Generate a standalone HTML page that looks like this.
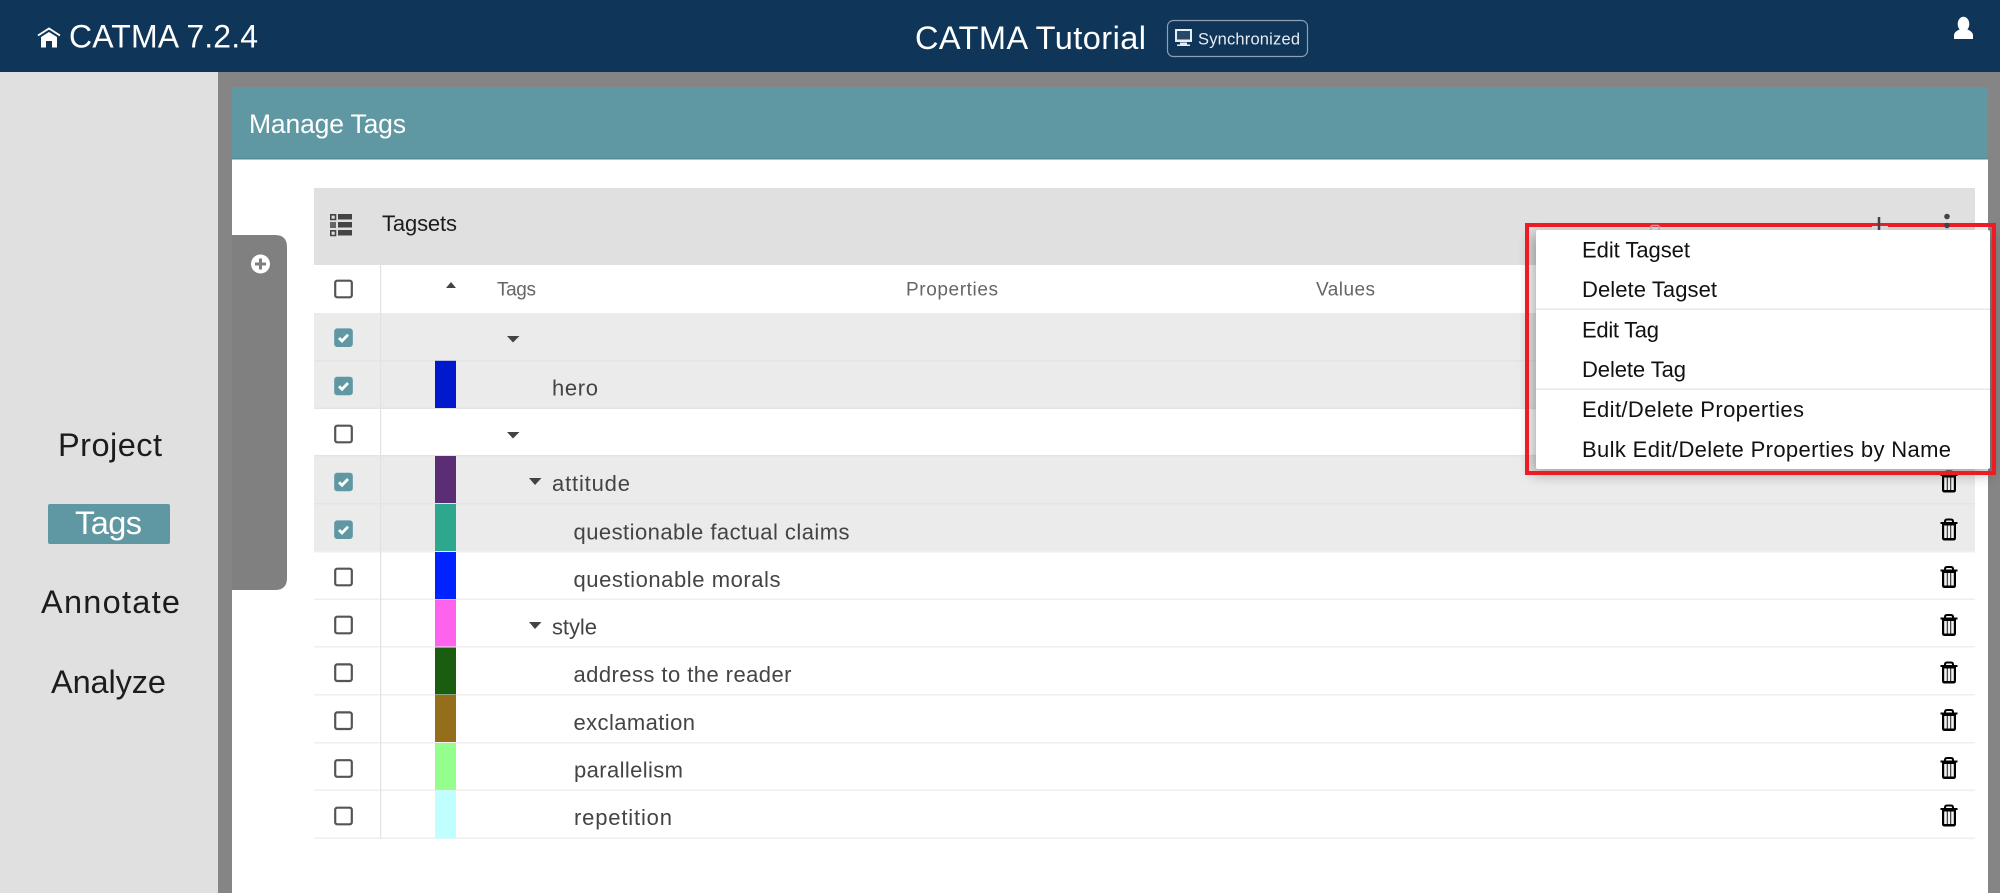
<!DOCTYPE html>
<html><head><meta charset="utf-8"><style>
html,body{margin:0;padding:0;width:2000px;height:893px;overflow:hidden;background:#fff}
svg{display:block}
text{font-family:"Liberation Sans",sans-serif}
</style></head><body>
<svg width="2000" height="893" viewBox="0 0 2000 893" xmlns="http://www.w3.org/2000/svg">
<defs>
<filter id="sh" x="-10%" y="-10%" width="120%" height="125%"><feGaussianBlur stdDeviation="7"/></filter>
<g id="trash"><path d="M-8.500-7H8.500M-4-7.500V-8.500Q-4-10.500 -2-10.500H2Q4-10.500 4-8.500V-7.500" fill="none" stroke="#000" stroke-width="2"/><path d="M-7-6H7V8Q7 10.500 4.500 10.500H-4.500Q-7 10.500-7 8Z" fill="#000"/><path d="M-4.800-4.500H-2.200V8H-4.800ZM-1.300-4.500H1.300V8H-1.300ZM2.200-4.500H4.800V8H2.200Z" fill="#f2f2f2"/></g>
<g id="cb"><rect x="-8.300" y="-8.300" width="16.600" height="16.600" rx="2" fill="#fff" stroke="#555" stroke-width="2.200"/></g>
<g id="cc"><rect x="-9.300" y="-9.300" width="18.600" height="18.600" rx="3" fill="#5f97a2"/><path d="M-4.500 0.300L-1.500 3.300L4.500-3" fill="none" stroke="#fff" stroke-width="2.800"/></g>
</defs>

<!-- header -->
<rect width="2000" height="72" fill="#0f3658"/>
<path d="M38 35.500L49 28.500L60 35.500" fill="none" stroke="#fff" stroke-width="1.800"/>
<path d="M49 32L57 37V47.500H52V41H46V47.500H41V37Z" fill="#fff"/>
<text x="69" y="47.500" font-size="32" fill="#fff" textLength="189">CATMA 7.2.4</text>
<text x="915" y="49" font-size="32.500" fill="#fff" textLength="231">CATMA Tutorial</text>
<rect x="1167.500" y="20.500" width="140" height="36" rx="6" fill="none" stroke="#8d9fb0" stroke-width="1.200"/>
<path d="M1175 29H1192V42H1175Z" fill="#e8edf1"/><rect x="1177" y="31" width="13" height="8.500" fill="#26486a"/><path d="M1180 42.500H1187V44.500H1190V46H1177V44.500H1180Z" fill="#e8edf1"/>
<text x="1198" y="44.500" font-size="16.500" fill="#e8edf1" textLength="102">Synchronized</text>
<ellipse cx="1963.500" cy="24" rx="5.800" ry="7.300" fill="#fff"/>
<path d="M1959.500 29.500Q1954.500 31.500 1954 35V39H1973V35Q1972.500 31.500 1967.500 29.500Z" fill="#fff"/>

<!-- chrome -->
<rect y="72" width="218" height="821" fill="#e0e0e0"/>
<rect x="218" y="72" width="1782" height="821" fill="#858585"/>
<rect x="232" y="87" width="1756" height="806" fill="#fff"/>
<rect x="232" y="87" width="1756" height="72" fill="#5f97a2"/>
<rect x="232" y="158" width="1756" height="1.500" fill="#558c97"/>
<text x="249" y="133" font-size="26.500" fill="#fff" textLength="157">Manage Tags</text>

<!-- sidebar -->
<text x="58" y="456" font-size="32.500" fill="#1c1c1c" textLength="104">Project</text>
<rect x="48" y="504" width="122" height="40" rx="2" fill="#5f97a2"/>
<text x="75" y="534" font-size="32.500" fill="#fff" textLength="67">Tags</text>
<text x="41" y="613" font-size="32.500" fill="#1c1c1c" textLength="139">Annotate</text>
<text x="51" y="693" font-size="32.500" fill="#1c1c1c" textLength="115">Analyze</text>

<!-- left tab -->
<path d="M232 235H275Q287 235 287 247V578Q287 590 275 590H232Z" fill="#808080"/>
<circle cx="260.500" cy="264" r="9.500" fill="#fff"/>
<path d="M255 264H266M260.500 258.500V269.500" stroke="#808080" stroke-width="3"/>

<!-- tagsets bar -->
<rect x="314" y="188" width="1661" height="77" fill="#e0e0e0"/>
<path d="M330.800 214.800H335.500V219.500H330.800ZM330.800 230.800H335.500V235.500H330.800Z" fill="none" stroke="#444" stroke-width="1.600"/>
<rect x="330" y="222" width="6" height="6" fill="#666"/>
<path d="M338 214H352V219.500H338ZM338 222H352V227.500H338ZM338 230H352V235.500H338Z" fill="#444"/>
<text x="382" y="231" font-size="22" fill="#1c1c1c" textLength="75">Tagsets</text>

<!-- column headers -->
<use href="#cb" x="343.500" y="289"/>
<path d="M446 288L451 282L456 288Z" fill="#444"/>
<text x="497" y="295.500" font-size="19" fill="#666" textLength="39">Tags</text>
<text x="906" y="295.500" font-size="19" fill="#666" textLength="92">Properties</text>
<text x="1316" y="295.500" font-size="19" fill="#666" textLength="59">Values</text>

<!-- rows -->
<rect x="314" y="313" width="1661" height="95" fill="#ebebeb"/>
<rect x="314" y="456" width="1661" height="95.500" fill="#ebebeb"/>
<g fill="#e4e4e4">
<rect x="314" y="360" width="1661" height="1.500"/>
<rect x="314" y="407.500" width="1661" height="1.500"/>
<rect x="314" y="455" width="1661" height="1.500"/>
<rect x="314" y="503" width="1661" height="1.500"/>
</g>
<g fill="#efefef">
<rect x="314" y="551" width="1661" height="1.500"/>
<rect x="314" y="598.500" width="1661" height="1.500"/>
<rect x="314" y="646" width="1661" height="1.500"/>
<rect x="314" y="694" width="1661" height="1.500"/>
<rect x="314" y="742" width="1661" height="1.500"/>
<rect x="314" y="789.500" width="1661" height="1.500"/>
<rect x="314" y="837.500" width="1661" height="1.500"/>
</g>
<rect x="380" y="265" width="1.200" height="574" fill="#e2e2e2"/>

<!-- swatches -->
<rect x="435" y="360.800" width="21" height="47.200" fill="#0019cc"/>
<rect x="435" y="456" width="21" height="47" fill="#5a2d75"/>
<rect x="435" y="504" width="21" height="47" fill="#2da88e"/>
<rect x="435" y="552" width="21" height="47" fill="#0022ff"/>
<rect x="435" y="599.500" width="21" height="47" fill="#fd63ed"/>
<rect x="435" y="647.500" width="21" height="47" fill="#1a5c10"/>
<rect x="435" y="695" width="21" height="47" fill="#946e1a"/>
<rect x="435" y="743" width="21" height="47" fill="#94ff8c"/>
<rect x="435" y="790.500" width="21" height="48" fill="#c0ffff"/>

<!-- checkboxes -->
<use href="#cc" x="343.500" y="337.700"/>
<use href="#cc" x="343.500" y="386"/>
<use href="#cb" x="343.500" y="434"/>
<use href="#cc" x="343.500" y="482"/>
<use href="#cc" x="343.500" y="529.700"/>
<use href="#cb" x="343.500" y="577"/>
<use href="#cb" x="343.500" y="625"/>
<use href="#cb" x="343.500" y="672.700"/>
<use href="#cb" x="343.500" y="720.700"/>
<use href="#cb" x="343.500" y="768.500"/>
<use href="#cb" x="343.500" y="816"/>

<!-- triangles -->
<g fill="#444">
<path d="M507 336H519.500L513 342.500Z"/>
<path d="M507 432H519.500L513 438.500Z"/>
<path d="M529 478H541.500L535 485Z"/>
<path d="M529 622H541.500L535 629Z"/>
</g>

<!-- row labels -->
<g font-size="22" fill="#444">
<text x="552" y="395.500" textLength="46">hero</text>
<text x="552" y="491.200" textLength="78">attitude</text>
<text x="573.500" y="539.300" textLength="276">questionable factual claims</text>
<text x="573.500" y="587" textLength="207">questionable morals</text>
<text x="552" y="634.500" textLength="45">style</text>
<text x="573.500" y="682" textLength="218">address to the reader</text>
<text x="573.500" y="730" textLength="121.500">exclamation</text>
<text x="574" y="777.500" textLength="109">parallelism</text>
<text x="574" y="825" textLength="98">repetition</text>
</g>

<!-- trash -->
<use href="#trash" x="1949" y="482"/>
<use href="#trash" x="1949" y="530"/>
<use href="#trash" x="1949" y="577.500"/>
<use href="#trash" x="1949" y="625.500"/>
<use href="#trash" x="1949" y="673"/>
<use href="#trash" x="1949" y="720.500"/>
<use href="#trash" x="1949" y="768.500"/>
<use href="#trash" x="1949" y="816"/>

<!-- menu -->
<rect x="1532" y="234" width="460" height="240" fill="#000" opacity=".32" filter="url(#sh)"/>
<rect x="1527" y="225" width="467" height="248" fill="none" stroke="#ed1c24" stroke-width="4"/>
<!-- toolbar icons peeking above the menu -->
<rect x="1872" y="226" width="16" height="4" fill="#d6d6d6"/>
<path d="M1879 217V230" stroke="#444" stroke-width="2.500"/>
<circle cx="1947" cy="216.500" r="2.800" fill="#444"/><circle cx="1947" cy="225.500" r="2.800" fill="#444"/>
<path d="M1651 230V227Q1651 225.500 1653 225.500H1657Q1659 225.500 1659 227V230" fill="none" stroke="#aaa" stroke-width="1.500"/>
<rect x="1536" y="230" width="454" height="239" rx="2" fill="#fff"/>
<rect x="1536" y="308.500" width="454" height="1.500" fill="#e8e8e8"/>
<rect x="1536" y="388.500" width="454" height="1.500" fill="#e8e8e8"/>
<g font-size="22" fill="#111">
<text x="1582" y="257.500" textLength="108">Edit Tagset</text>
<text x="1582" y="297" textLength="135">Delete Tagset</text>
<text x="1582" y="337.500" textLength="77">Edit Tag</text>
<text x="1582" y="377" textLength="104">Delete Tag</text>
<text x="1582" y="417" textLength="222">Edit/Delete Properties</text>
<text x="1582" y="457" textLength="369">Bulk Edit/Delete Properties by Name</text>
</g>
</svg>
</body></html>
